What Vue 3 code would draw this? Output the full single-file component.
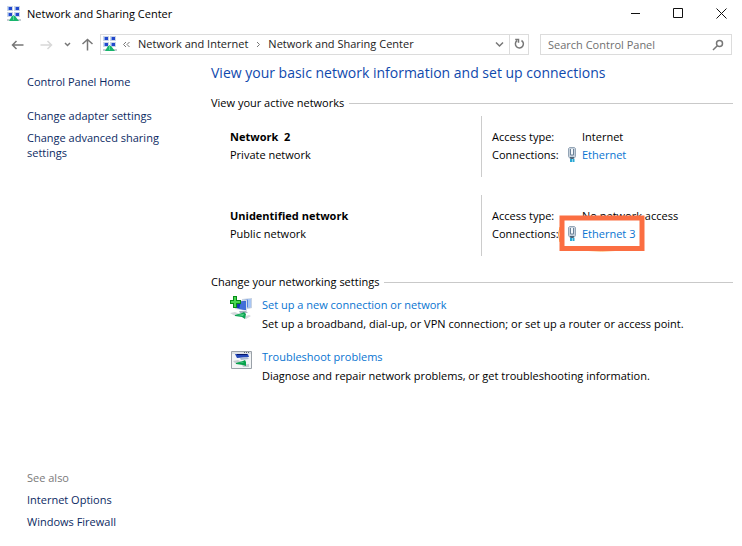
<template>
  <div class="window">
    <header class="titlebar">
      <svg class="network-icon" viewBox="0 0 14 16" aria-hidden="true">
        <use href="#network-glyph" />
      </svg>
      <h1 class="titlebar__text">Network and Sharing Center</h1>
      <div class="titlebar__buttons">
        <button type="button" class="titlebar__button" aria-label="Minimize">
          <svg width="11" height="11" viewBox="0 0 11 11"><path d="M1 5.5h9" /></svg>
        </button>
        <button type="button" class="titlebar__button" aria-label="Maximize">
          <svg width="11" height="11" viewBox="0 0 11 11"><path d="M.5 .5h9v9h-9z" /></svg>
        </button>
        <button type="button" class="titlebar__button" aria-label="Close">
          <svg width="11" height="11" viewBox="0 0 11 11"><path d="M.5 .5l10 10M10.5 .5l-10 10" /></svg>
        </button>
      </div>
    </header>

    <nav class="toolbar">
      <div class="toolbar__history">
        <button type="button" class="tool tool--back" aria-label="Back">
          <svg width="13" height="12" viewBox="0 0 13 12"><path d="M5.500 2L1.500 6l4 4M1.500 6h11" /></svg>
        </button>
        <button type="button" class="tool tool--forward" aria-label="Forward" disabled>
          <svg width="13" height="12" viewBox="0 0 13 12"><path d="M7.500 2l4 4-4 4M11.500 6H.5" /></svg>
        </button>
        <button type="button" class="tool tool--recent" aria-label="Recent locations">
          <svg width="7" height="5" viewBox="0 0 7 5"><path d="M1 1l2.500 2.500L6 1" /></svg>
        </button>
        <button type="button" class="tool tool--up" aria-label="Up">
          <svg width="13" height="13" viewBox="0 0 13 13"><path d="M1.500 6l5-4.500 5 4.500M6.500 1.500v11" /></svg>
        </button>
      </div>

      <div class="address">
        <svg class="network-icon" viewBox="0 0 14 16" aria-hidden="true">
          <use href="#network-glyph" />
        </svg>
        <svg class="address__overflow" width="9" height="7" viewBox="0 0 9 7" aria-hidden="true">
          <path d="M4 1L1.500 3.500 4 6M7.500 1L5 3.500 7.500 6" />
        </svg>
        <a href="#" class="address__crumb">Network and Internet</a>
        <svg class="address__separator" width="5" height="7" viewBox="0 0 5 7" aria-hidden="true">
          <path d="M1 1l2.500 2.500L1 6" />
        </svg>
        <a href="#" class="address__crumb">Network and Sharing Center</a>
        <button type="button" class="address__button address__button--drop" aria-label="Previous locations">
          <svg width="9" height="7" viewBox="0 0 9 7"><path d="M1 1.500L4.500 5 8 1.500" /></svg>
        </button>
        <button type="button" class="address__button address__button--refresh" aria-label="Refresh">
          <svg width="11" height="12" viewBox="0 0 11 12">
            <path d="M7.500 2.500a4 4 0 1 1-4.500 .2M1.200 1.500h3.300v3.300" />
          </svg>
        </button>
      </div>

      <div class="search">
        <input v-model="query" class="search__input" type="text" placeholder="Search Control Panel" aria-label="Search Control Panel" />
        <svg width="12" height="12" viewBox="0 0 12 12" aria-hidden="true">
          <circle cx="7.500" cy="4.500" r="3" />
          <path d="M5.300 6.700L1 11" />
        </svg>
      </div>
    </nav>

    <div class="body">
      <aside class="sidebar">
        <a href="#" class="sidebar__link sidebar__link--home">Control Panel Home</a>
        <a v-for="task in tasks" :key="task" href="#" class="sidebar__link">{{ task }}</a>
        <div class="sidebar__footer">
          <span class="sidebar__caption">See also</span>
          <a v-for="item in seeAlso" :key="item" href="#" class="sidebar__link">{{ item }}</a>
        </div>
      </aside>

      <main class="content">
        <h2 class="content__title">View your basic network information and set up connections</h2>

        <section class="group group--networks">
          <h3 class="group__title">View your active networks</h3>
          <div v-for="network in networks" :key="network.name" class="network">
            <div class="network__info">
              <strong class="network__name">{{ network.name }}</strong>
              <span>{{ network.type }}</span>
            </div>
            <dl class="network__details">
              <dt>Access type:</dt>
              <dd>{{ network.access }}</dd>
              <dt>Connections:</dt>
              <dd class="connection">
                <svg class="connection__icon" width="10" height="16" viewBox="0 0 10 16" aria-hidden="true">
                  <path d="M1.500 1.500l1-1h5l1 1v8l-1.500 2H3l-1.500-2z" fill="#c6d1dc" stroke="#94a5b6" />
                  <path d="M3.500 2v6h3V2" fill="#f4f8fb" stroke="#6c8298" />
                  <path d="M3 10.500h4M3.500 11.500h3" stroke="#4c6479" />
                  <path d="M4 12v3M6.500 12v3" stroke="#2aa9d6" stroke-width="2" />
                </svg>
                <a href="#" class="link">{{ network.connection }}</a>
                <svg v-if="network.highlighted" class="connection__mark" width="88" height="38" viewBox="0 0 88 38" aria-hidden="true">
                  <path d="M3 12Q0 19 3 27M18 35Q44 37 72 35" fill="none" stroke="#ff9a2e" stroke-width="1" />
                  <path d="M5 3h80v30.500H5z" fill="none" stroke="#fb6e42" stroke-width="5" />
                </svg>
              </dd>
            </dl>
          </div>
        </section>

        <section class="group">
          <h3 class="group__title">Change your networking settings</h3>
          <div class="setting">
            <svg class="setting__icon" width="24" height="24" viewBox="0 0 24 24" aria-hidden="true">
              <path d="M13 3l10-1v10l-9 2z" fill="#c8d3e2" />
              <path d="M15 4l7-1v8l-7 1z" fill="#5584df" />
              <path d="M19 3l3 0v8l-3 1z" fill="#a8c6f4" />
              <path d="M5 5l13-1v11l-12-2z" fill="#d4dde9" />
              <path d="M7 6l10-1v9L7 12z" fill="#1638b5" />
              <path d="M12 6l5-1v9l-7-1z" fill="#416fd8" />
              <path d="M10 15l7 0 2 2-8 0z" fill="#aab4c0" />
              <path d="M1 17l5-1 5 2-5 2zM13 21l7-2 2 1-5 3z" fill="#d5d9dd" />
              <path d="M6 19l7-2 2-1 2 2-1 5-3-2-7-1z" fill="#0fa455" />
              <path d="M8 19l7-1-1 2z" fill="#55d58a" />
              <path d="M4 0h4v4h4v4H8v4H4V8H1V4h3z" fill="#078c18" />
              <path d="M5 1h2v4h4v2H7v4H5V7H2V5h3z" fill="#48d650" />
            </svg>
            <div class="setting__text">
              <a href="#" class="link">Set up a new connection or network</a>
              <span>Set up a broadband, dial-up, or VPN connection; or set up a router or access point.</span>
            </div>
          </div>
          <div class="setting">
            <svg class="setting__icon" width="24" height="24" viewBox="0 0 24 24" aria-hidden="true">
              <path d="M2.500 3.500h20v17h-20z" fill="#f3f5f6" stroke="#9aa1a8" />
              <path d="M3 4h19v2H3z" fill="#dce0e4" />
              <path d="M15 4.500h1M17 4.500h1M19 4.500h1" stroke="#59636d" />
              <path d="M6 6h13l1 3-12 1z" fill="#2448b8" />
              <path d="M8 6h10v1H8z" fill="#07186c" />
              <path d="M11 10l7-1 2 2-8 1z" fill="#a9bad0" />
              <path d="M4 13l5-1 4 2-6 2zM13 17l7-1v3l-6 0z" fill="#c5cbd0" />
              <path d="M7 15l7-2 2-1 1 2v4l-3-1-7-1z" fill="#08a24c" />
              <path d="M9 15l6-1-1 1z" fill="#4bd086" />
            </svg>
            <div class="setting__text">
              <a href="#" class="link">Troubleshoot problems</a>
              <span>Diagnose and repair network problems, or get troubleshooting information.</span>
            </div>
          </div>
        </section>
      </main>
    </div>

    <svg class="symbols" aria-hidden="true">
      <symbol id="network-glyph" viewBox="0 0 14 16">
        <path d="M0 0h6v5H0zM7 0h6v5H7zM0 6h6v5H0zM7 6h6v5H7z" fill="#cbd6e6" />
        <path d="M1 1h4v3H1zM8 1h4v3H8zM1 7h4v3H1zM8 7h4v3H8z" fill="#2347cb" />
        <path d="M1 1h1v3H1zM8 1h1v3H8zM1 7h1v3H1zM8 7h1v3H8z" fill="#7fa5f2" />
        <path d="M0 13h14v2H0z" fill="#c6ced4" />
        <path d="M5 10h3l4 5H2z" fill="#18b56c" />
        <path d="M6 9h1v5H6z" fill="#55d79a" />
      </symbol>
    </svg>
  </div>
</template>

<script setup>
import { ref } from 'vue'

const query = ref('')

const tasks = ['Change adapter settings', 'Change advanced sharing settings']
const seeAlso = ['Internet Options', 'Windows Firewall']

const networks = [
  {
    name: 'Network  2',
    type: 'Private network',
    access: 'Internet',
    connection: 'Ethernet',
    highlighted: false,
  },
  {
    name: 'Unidentified network',
    type: 'Public network',
    access: 'No network access',
    connection: 'Ethernet 3',
    highlighted: true,
  },
]
</script>

<style>
body {
  margin: 0;
  background: #fff;
}
</style>

<style scoped>
.window {
  min-height: 100vh;
  display: flex;
  flex-direction: column;
  background: #fff;
  color: #000;
  font-family: 'Open Sans', 'Noto Sans', sans-serif;
  font-size: 11px;
  line-height: 18px;
  box-sizing: border-box;
}

.window *,
.window *::before {
  box-sizing: border-box;
}

h1,
h2,
h3,
dl,
dd {
  margin: 0;
  font-size: inherit;
  font-weight: 400;
}

a {
  color: inherit;
  text-decoration: none;
}

button {
  display: flex;
  align-items: center;
  justify-content: center;
  padding: 0;
  border: none;
  background: transparent;
}

svg {
  flex-shrink: 0;
}

.symbols {
  position: absolute;
  width: 0;
  height: 0;
}

.network-icon {
  width: 14px;
  height: 16px;
}

.titlebar {
  height: 27px;
  padding-left: 7px;
  display: flex;
  align-items: center;
}

.titlebar__text {
  margin-left: 6px;
}

.titlebar__buttons {
  margin-left: auto;
  margin-right: -1px;
  display: flex;
}

.titlebar__button {
  width: 43px;
  height: 26px;
}

.titlebar__button svg {
  fill: none;
  stroke: #111;
}

.toolbar {
  padding: 7px 10px 0 11px;
  display: flex;
  align-items: center;
}

.toolbar__history {
  width: 89px;
  flex-shrink: 0;
  display: flex;
  align-items: center;
}

.tool svg {
  fill: none;
  stroke: #777;
  stroke-width: 1.5;
}

.tool--forward {
  margin-left: 16px;
}

.tool--forward svg {
  stroke: #d8d8d8;
}

.tool--recent {
  margin-left: 11px;
}

.tool--up {
  margin-left: 10px;
}

.address {
  height: 21px;
  min-width: 0;
  flex: 1;
  padding: 0 0 1px 2px;
  display: flex;
  align-items: center;
  border: 1px solid #dcdcdc;
  color: #222;
}

.address svg {
  fill: none;
  stroke: #777;
}

.address .network-icon {
  stroke: none;
}

.address__overflow {
  margin: 0 7px 0 5px;
}

.address__separator {
  margin: 0 7px 0 8px;
}

.address__crumb {
  line-height: 16px;
  white-space: nowrap;
}

.address__button {
  height: 19px;
  width: 19px;
}

.address__button svg {
  stroke-width: 1.5;
}

.address__button--drop {
  margin-left: auto;
}

.address__button--refresh {
  border-left: 1px solid #dcdcdc;
}

.search {
  width: 192px;
  height: 21px;
  margin-left: 11px;
  padding: 0 7px;
  display: flex;
  align-items: center;
  border: 1px solid #dcdcdc;
}

.search__input {
  min-width: 0;
  flex: 1;
  padding: 0;
  border: none;
  outline: none;
  background: transparent;
  font: inherit;
  color: #222;
}

.search__input::placeholder {
  color: #707070;
  opacity: 1;
}

.search svg {
  fill: none;
  stroke: #777;
  stroke-width: 1.5;
}

.body {
  flex: 1;
  display: flex;
}

.sidebar {
  width: 211px;
  flex-shrink: 0;
  padding: 19px 40px 17px 27px;
  display: flex;
  flex-direction: column;
  color: #0b2a63;
}

.sidebar__link {
  margin-bottom: 7px;
  line-height: 15px;
}

.sidebar__link--home {
  margin-bottom: 19px;
}

.sidebar__footer {
  margin-top: auto;
  display: flex;
  flex-direction: column;
}

.sidebar__caption {
  margin-bottom: 7px;
  color: #7a7a7a;
  line-height: 15px;
}

.sidebar__footer .sidebar__link:last-child {
  margin-bottom: 0;
}

.content {
  min-width: 0;
  flex: 1;
  padding: 8px 9px 0 0;
}

.content__title {
  color: #0f49ad;
  font-size: 14px;
  line-height: 20px;
}

.group {
  margin-top: 17px;
}

.group--networks {
  margin-top: 11px;
}

.group__title {
  display: flex;
  align-items: center;
  gap: 5px;
  margin-bottom: 4px;
}

.group__title::after {
  content: '';
  flex: 1;
  height: 1px;
  background: #c9c9c9;
}

.network {
  padding-left: 19px;
  display: grid;
  grid-template-columns: 251px 1fr;
}

.network + .network {
  margin-top: 18px;
}

.network__info {
  padding-top: 12px;
  display: flex;
  flex-direction: column;
}

.network__name {
  font-weight: 700;
  white-space: pre;
}

.network__details {
  padding: 12px 0 13px 10px;
  display: grid;
  grid-template-columns: 90px 1fr;
  border-left: 1px solid #ccc;
}

.connection {
  position: relative;
}

.connection__icon {
  position: absolute;
  top: 1px;
  left: -15px;
}

.connection__mark {
  position: absolute;
  top: -10px;
  left: -25px;
  pointer-events: none;
}

.link {
  color: #0874d1;
}

.setting {
  padding: 1px 0 0 18px;
  display: flex;
  gap: 9px;
}

.setting + .setting {
  margin-top: 14px;
}

.setting__text {
  display: flex;
  flex-direction: column;
  gap: 1px;
}
</style>
